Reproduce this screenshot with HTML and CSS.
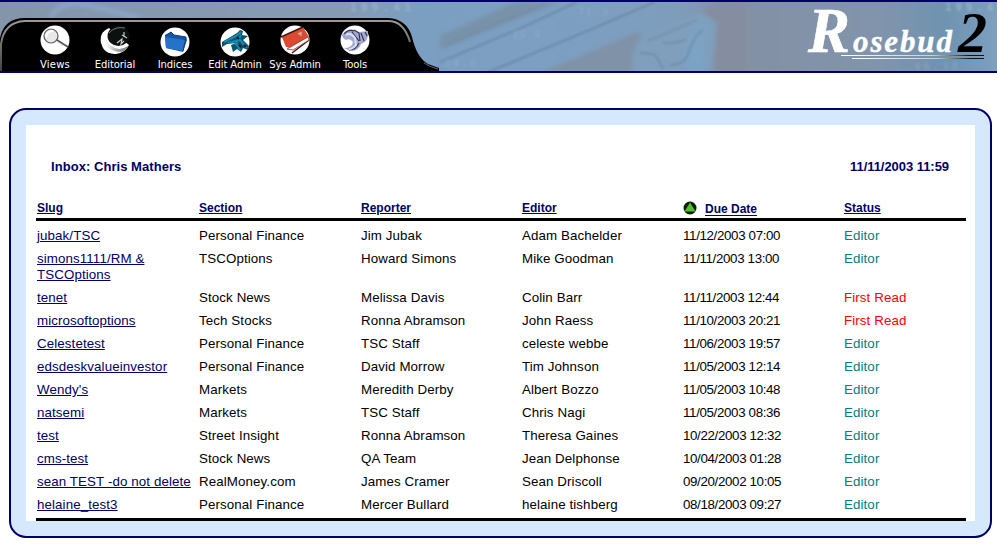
FILE: index.html
```html
<!DOCTYPE html>
<html lang="en">
<head>
<meta charset="utf-8">
<title>Rosebud 2</title>
<link rel="stylesheet" href="styles.css">
</head>
<body>
<header class="banner">
  <svg class="backdrop" width="997" height="69" viewBox="0 2 997 69" preserveAspectRatio="none">
    <defs>
      <linearGradient id="sky" x1="0" x2="1" y1="0" y2="0">
        <stop offset="0" stop-color="#8495a9"/><stop offset=".2" stop-color="#8699b0"/>
        <stop offset=".34" stop-color="#869bb1"/><stop offset=".42" stop-color="#7b9fc1"/>
        <stop offset=".55" stop-color="#7c9fc2"/><stop offset=".68" stop-color="#7e9dbb"/>
        <stop offset=".73" stop-color="#8490a4"/><stop offset=".88" stop-color="#8194ab"/>
        <stop offset=".95" stop-color="#6f93b1"/><stop offset="1" stop-color="#7ca0bd"/>
      </linearGradient>
      <filter id="soft" x="-20%" y="-20%" width="140%" height="140%"><feGaussianBlur stdDeviation="2"/></filter>
      <filter id="haze"><feGaussianBlur stdDeviation=".8"/></filter>
    </defs>
    <rect y="2" width="997" height="69" fill="url(#sky)"/>
    <g filter="url(#soft)">
      <path d="M50 18Q60 0 85 5T140 18" fill="none" stroke="#8ba9c8" stroke-width="4"/>
      <path d="M440 36L515 2H560L440 50Z" fill="#7892a9"/>
      <path d="M540 73L638 32L642 38L630 73Z" fill="#8092a7"/>
      <path d="M632 73Q630 45 645 35L700 12L717 22L711 73Z" fill="#7f9fbd"/>
      <path d="M717 2H745V73H714L718 25L702 10Z" fill="#858da0"/>
      <path d="M686 73L688 36L706 20L704 73Z" fill="#7ba3c3"/>
    </g>
    <g fill="none" filter="url(#haze)" opacity=".8">
      <path d="M440 62L521 28L577 2M486 73L580 34L655 2" stroke="#66819e" stroke-width="1.6"/>
      <path d="M445 46L500 22L545 4" stroke="#708ba3" stroke-width="1.2"/>
      <path d="M640 53l14 1 5 7 4 8M663 43q13 1 23-4M670 65q15 0 19-13 5-17 14-22" stroke="#6c8aa6" stroke-width="1.8"/>
      <path d="M648 41L697 20" stroke="#7391ab" stroke-width="2"/>
    </g>
    <g class="ticker" filter="url(#haze)">
      <text x="350" y="11" textLength="61">199.41</text>
      <text x="945" y="11" textLength="48">199.4</text>
      <text class="faint" x="914" y="70" textLength="44">46.38</text>
      <text class="faint" x="578" y="15" textLength="30">71.3</text>
      <text class="faint" x="512" y="38" textLength="28">25.4</text>
      <text class="faint" x="444" y="67" textLength="32">34.6</text>
    </g>
  </svg>
  <svg class="nav-shape" width="442" height="53" viewBox="0 18 442 53">
    <defs><linearGradient id="metal" x1="0" y1="0" x2="0" y2="1"><stop offset="0" stop-color="#9c9898"/><stop offset="1" stop-color="#44423f"/></linearGradient></defs>
    <path d="M0 71V38Q4 18 25 18H388Q407 19 412 37Q417 58 428 64L439 68V71Z" fill="#000"/>
    <path d="M1 71V44Q4 22 25 21H388Q404 21 410 42" fill="none" stroke="url(#metal)" stroke-width="2"/>
    <path d="M424 63Q430 67 438 69" fill="none" stroke="#666" stroke-width="1"/>
  </svg>
  <nav class="menu">
    <a class="item"><svg class="icon" viewBox="0 0 30 30"><circle cx="15" cy="15" r="14.5" fill="#fff"/><circle cx="11" cy="11" r="7" fill="#e8e8e8" stroke="#5f5b59" stroke-width="1.2"/><path d="M6 12q1-6 7-6" fill="none" stroke="#fff" stroke-width="2"/><path d="M17 15l11 7" stroke="#5c5753" stroke-width="1.8"/><path d="M17 17l6 4" stroke="#ddd"/></svg><span class="wide">Views</span></a>
    <a class="item"><svg class="icon" viewBox="0 0 30 30"><defs><linearGradient id="knob"><stop offset="0" stop-color="#fff"/><stop offset=".5" stop-color="#aaa"/><stop offset="1" stop-color="#777"/></linearGradient></defs><path d="M9 3Q-1 7 1 18 4 30 16 29 25 28 29 20L12 6Z" fill="#fff"/><path d="M7 6Q3 15 11 21q8 6 17 0-2 5-7 6-9 0-14-6-3-8 0-15Z" fill="url(#knob)"/><ellipse cx="18.500" cy="11" rx="11" ry="10" fill="#0c1110"/><path d="M9 8Q15 1 25 3" fill="none" stroke="#6d7571"/><path d="M17 18l5-4-1 5 3-3M22 10l5 3M24 7l0 4" fill="none" stroke="#ccc" stroke-width="1.2"/></svg><span>Editorial</span></a>
    <a class="item low"><svg class="icon" viewBox="0 0 30 30"><circle cx="15" cy="15" r="14.5" fill="#fff"/><path d="M5 8l6-3 3 3 12 2 1 3-4 12-17-4Z" fill="#1555a3"/><path d="M5 10l21 3-3 11-17-3Z" fill="#2473c8"/><path d="M5 9l6-4 3 3 12 2-3 14" fill="none" stroke="#103d78"/></svg><span>Indices</span></a>
    <a class="item low"><svg class="icon" viewBox="0 0 30 30"><circle cx="15" cy="15" r="14.5" fill="#fff"/><path d="M2 15l15-9 3-3 3 1-1 4 6 1-5 4 6 6-1 4-5-2-2 4-4-3-4 3-2-7 5-2-9 1-5 3Z" fill="#0b5368"/><path d="M4 15l12-6 5-4M8 16l12-3 7 8M16 16l4 7M21 8l-6 10" fill="none" stroke="#1688b0" stroke-width="2.2"/><path d="M17 10l2 2M19 18l2 2M24 18l2 2" stroke="#031f2a" stroke-width="2"/></svg><span>Edit Admin</span></a>
    <a class="item"><svg class="icon" viewBox="0 0 30 30"><circle cx="15" cy="15" r="14.5" fill="#fff"/><path d="M2 12L23 2l6 10-18 11-5-1Z" fill="#dd4931"/><path d="M1 12L23 2M29 15L12 28" stroke="#421610" stroke-width="1.5"/><path d="M7 24l21-12 1 3-16 10Z" fill="#fff" stroke="#8c3b2e" stroke-width=".8"/><path d="M18 9l4-1M20 7l1 4" stroke="#d6aaa0" stroke-width="1.3"/></svg><span>Sys Admin</span></a>
    <a class="item"><svg class="icon" viewBox="0 0 30 30"><circle cx="15" cy="15" r="14.5" fill="#fff"/><path d="M3 9q4-6 12-4l4 2 9-1q1 11-7 13-2 6-9 7-5-1-8-3 8 0 9-6-3-4-7-2-4-2-4-6Z" fill="#a4a9cf"/><path d="M14 5l5 3 1 8M12 7l7 9M21 8l3 8M25 7l2 4M4 9q4-5 10-3M19 18q-3 7-10 7" fill="none" stroke="#2e3151" stroke-width="1.1"/><path d="M6 10q5-3 9 3l1 7q-3 4-7 4" fill="none" stroke="#dcdff5" stroke-width="2"/></svg><span>Tools</span></a>
  </nav>
  <svg class="logo" width="190" height="60" viewBox="805 5 190 60">
    <defs><linearGradient id="rule"><stop offset="0" stop-color="#fff"/><stop offset=".65" stop-color="#ccc"/><stop offset=".9" stop-color="#111"/></linearGradient></defs>
    <text class="logo-r" x="808" y="52" textLength="42" lengthAdjust="spacingAndGlyphs">R</text>
    <text class="logo-rest" x="853" y="52" textLength="99" lengthAdjust="spacing">osebud</text>
    <text class="logo-two" x="958" y="52" textLength="29" lengthAdjust="spacingAndGlyphs">2</text>
    <rect x="841" y="55" width="143" height="1" fill="url(#rule)"/>
    <rect x="852" y="58" width="132" height="1" fill="url(#rule)"/>
  </svg>
</header>
<main class="frame">
  <section class="inbox">
    <div class="heading"><h1>Inbox: Chris Mathers</h1><time>11/11/2003 11:59</time></div>
    <div class="table">
      <div class="row head"><a>Slug</a><a>Section</a><a>Reporter</a><a>Editor</a><div class="due"><svg width="14" height="14" viewBox="0 0 14 14"><circle cx="7" cy="7" r="6.5" fill="#111b08"/><path d="M7 1.500L12.500 10.500H1.500Z" fill="#4fc32c"/></svg><a>Due Date</a></div><a>Status</a></div>
      <div class="row"><a>jubak/TSC</a><span>Personal Finance</span><span>Jim Jubak</span><span>Adam Bachelder</span><span class="date">11/12/2003 07:00</span><span class="editor">Editor</span></div>
      <div class="row"><a>simons1111/RM &amp;<br>TSCOptions</a><span>TSCOptions</span><span>Howard Simons</span><span>Mike Goodman</span><span class="date">11/11/2003 13:00</span><span class="editor">Editor</span></div>
      <div class="row"><a>tenet</a><span>Stock News</span><span>Melissa Davis</span><span>Colin Barr</span><span class="date">11/11/2003 12:44</span><span class="first">First Read</span></div>
      <div class="row"><a>microsoftoptions</a><span>Tech Stocks</span><span>Ronna Abramson</span><span>John Raess</span><span class="date">11/10/2003 20:21</span><span class="first">First Read</span></div>
      <div class="row"><a>Celestetest</a><span>Personal Finance</span><span>TSC Staff</span><span>celeste webbe</span><span class="date">11/06/2003 19:57</span><span class="editor">Editor</span></div>
      <div class="row"><a>edsdeskvalueinvestor</a><span>Personal Finance</span><span>David Morrow</span><span>Tim Johnson</span><span class="date">11/05/2003 12:14</span><span class="editor">Editor</span></div>
      <div class="row"><a>Wendy's</a><span>Markets</span><span>Meredith Derby</span><span>Albert Bozzo</span><span class="date">11/05/2003 10:48</span><span class="editor">Editor</span></div>
      <div class="row"><a>natsemi</a><span>Markets</span><span>TSC Staff</span><span>Chris Nagi</span><span class="date">11/05/2003 08:36</span><span class="editor">Editor</span></div>
      <div class="row"><a>test</a><span>Street Insight</span><span>Ronna Abramson</span><span>Theresa Gaines</span><span class="date">10/22/2003 12:32</span><span class="editor">Editor</span></div>
      <div class="row"><a>cms-test</a><span>Stock News</span><span>QA Team</span><span>Jean Delphonse</span><span class="date">10/04/2003 01:28</span><span class="editor">Editor</span></div>
      <div class="row"><a>sean TEST -do not delete</a><span>RealMoney.com</span><span>James Cramer</span><span>Sean Driscoll</span><span class="date">09/20/2002 10:05</span><span class="editor">Editor</span></div>
      <div class="row"><a>helaine_test3</a><span>Personal Finance</span><span>Mercer Bullard</span><span>helaine tishberg</span><span class="date">08/18/2003 09:27</span><span class="editor">Editor</span></div>
    </div>
  </section>
</main>
</body>
</html>
```
FILE: styles.css
```css
* { box-sizing: border-box; }
body { margin: 0; background: #fff; color: #000; font: 13.33px/16px "Liberation Sans", Arial, sans-serif; overflow: hidden; }
.banner { position: relative; height: 73px; border-top: 2px solid #006; border-bottom: 2px solid #006; display: flex; justify-content: space-between; }
.backdrop { position: absolute; inset: 0; }
.ticker { font: bold 11px "DejaVu Sans Mono", monospace; fill: #a3bace; opacity: .7; }
.faint { opacity: .45; }
.nav-shape { position: absolute; left: 0; bottom: 0; }
.menu { position: relative; display: flex; padding: 23px 0 0 25px; }
.item { width: 60px; display: flex; flex-direction: column; align-items: center; color: #fff; font: 10px/12px "DejaVu Sans", sans-serif; white-space: nowrap; height: 46px; justify-content: space-between; }
.item span { letter-spacing: -.1px; }
.item .wide { letter-spacing: .2px; }
.icon { width: 30px; height: 30px; }
.low .icon { position: relative; top: 2px; }
.logo { position: relative; margin: 3px 2px 0 0; }
.logo-r { font: bold italic 63px "Liberation Serif", serif; fill: #fff; stroke: #fff; stroke-width: .6px; }
.logo-rest { font: bold italic 31px "Liberation Serif", serif; fill: #fff; stroke: #fff; stroke-width: .4px; }
.logo-two { font: bold italic 57px "Liberation Serif", serif; fill: #000; }
.frame { width: 983px; height: 430px; margin: 35px 0 0 9px; padding: 15px; border: 2px solid #006; border-radius: 17px; background: #d5e8fd; }
.inbox { height: 396px; background: #fff; padding: 34px 9px 0 10px; }
.heading { display: flex; justify-content: space-between; height: 41px; padding: 0 17px 0 15px; color: #006; font-weight: bold; font-size: 13px; letter-spacing: .05px; }
.heading h1 { margin: 0; font: inherit; }
.heading time { letter-spacing: -.05px; }
.table { border-bottom: 3px solid #000; padding-bottom: 1px; }
.row { display: grid; grid-template-columns: 162px 162px 161px 161px 161px 1fr; padding: 3px 0 4px 1px; align-items: start; white-space: nowrap; letter-spacing: .1px; }
.row > a { color: #006; text-decoration: underline; text-underline-offset: 1px; justify-self: start; }
.head { height: 21px; padding-top: 0; border-bottom: 3px solid #000; margin-bottom: 4px; color: #006; font-size: 12px; font-weight: bold; letter-spacing: 0; }
.due { display: flex; gap: 8px; }
.due svg { margin-top: 1px; }
.due a { text-decoration: underline; text-underline-offset: 2px; position: relative; top: 1px; }
.date { letter-spacing: -.35px; }
.editor { color: #008080; }
.first { color: #f00; }
```
